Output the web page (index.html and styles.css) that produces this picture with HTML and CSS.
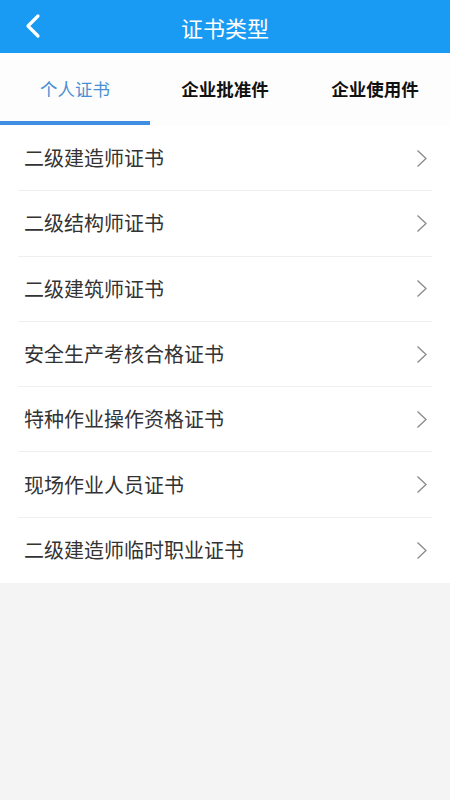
FILE: index.html
```html
<!DOCTYPE html>
<html lang="zh-CN">
<head>
<meta charset="utf-8">
<title>证书类型</title>
<link rel="stylesheet" href="styles.css">
</head>
<body>
<header class="topbar">
  <span class="back">
    <svg width="16" height="26" viewBox="0 0 16 26"><path d="M13 3 L3 13 L13 23" fill="none" stroke="#fff" stroke-width="3.2" stroke-linecap="round" stroke-linejoin="round"/></svg>
  </span>
  <h1 class="title">证书类型</h1>
</header>
<nav class="tabs">
  <div class="tab active">个人证书</div>
  <div class="tab">企业批准件</div>
  <div class="tab">企业使用件</div>
</nav>
<ul class="list">
  <li class="row"><span class="label">二级建造师证书</span><span class="chev"><svg width="12" height="19" viewBox="0 0 12 19"><path d="M1.5 1.5 L10 9.5 L1.5 17.5" fill="none" stroke="#8a8a8a" stroke-width="1.3"/></svg></span></li>
  <li class="row"><span class="label">二级结构师证书</span><span class="chev"><svg width="12" height="19" viewBox="0 0 12 19"><path d="M1.5 1.5 L10 9.5 L1.5 17.5" fill="none" stroke="#8a8a8a" stroke-width="1.3"/></svg></span></li>
  <li class="row"><span class="label">二级建筑师证书</span><span class="chev"><svg width="12" height="19" viewBox="0 0 12 19"><path d="M1.5 1.5 L10 9.5 L1.5 17.5" fill="none" stroke="#8a8a8a" stroke-width="1.3"/></svg></span></li>
  <li class="row"><span class="label">安全生产考核合格证书</span><span class="chev"><svg width="12" height="19" viewBox="0 0 12 19"><path d="M1.5 1.5 L10 9.5 L1.5 17.5" fill="none" stroke="#8a8a8a" stroke-width="1.3"/></svg></span></li>
  <li class="row"><span class="label">特种作业操作资格证书</span><span class="chev"><svg width="12" height="19" viewBox="0 0 12 19"><path d="M1.5 1.5 L10 9.5 L1.5 17.5" fill="none" stroke="#8a8a8a" stroke-width="1.3"/></svg></span></li>
  <li class="row"><span class="label">现场作业人员证书</span><span class="chev"><svg width="12" height="19" viewBox="0 0 12 19"><path d="M1.5 1.5 L10 9.5 L1.5 17.5" fill="none" stroke="#8a8a8a" stroke-width="1.3"/></svg></span></li>
  <li class="row"><span class="label">二级建造师临时职业证书</span><span class="chev"><svg width="12" height="19" viewBox="0 0 12 19"><path d="M1.5 1.5 L10 9.5 L1.5 17.5" fill="none" stroke="#8a8a8a" stroke-width="1.3"/></svg></span></li>
</ul>
</body>
</html>
```
FILE: styles.css
```css
* { box-sizing: border-box; }
html, body {
  margin: 0;
  padding: 0;
  background: #f4f4f4;
  font-family: "Noto Sans CJK SC", "Noto Sans", sans-serif;
}
.topbar {
  height: 53px;
  background: #1a9bf3;
  display: flex;
  align-items: center;
  justify-content: center;
  position: relative;
}
.back {
  position: absolute;
  left: 25px;
  top: 13px;
  display: flex;
}
.title {
  margin: 0;
  color: #fff;
  font-size: 22px;
  font-weight: 400;
  line-height: 1;
}
.tabs {
  display: flex;
  background: #fdfdfd;
  padding-bottom: 1px;
}
.tab {
  flex: 1;
  height: 72px;
  display: flex;
  align-items: center;
  justify-content: center;
  font-size: 17.5px;
  font-weight: 600;
  color: #111;
  border-bottom: 4px solid transparent;
  padding-top: 2px;
}
.tab.active {
  color: #4a8fd3;
  font-weight: 400;
  border-bottom-color: #3f8ee2;
}
.list {
  list-style: none;
  margin: 0;
  padding: 0 18px;
  background: #fff;
}
.row {
  height: 65.3px;
  display: flex;
  align-items: center;
  justify-content: space-between;
  padding: 0 4px 0 6px;
  border-bottom: 1px solid #efefef;
}
.row:last-child { border-bottom: none; }
.label {
  font-size: 20px;
  color: #333;
  line-height: 1;
}
.chev { display: flex; }
```
